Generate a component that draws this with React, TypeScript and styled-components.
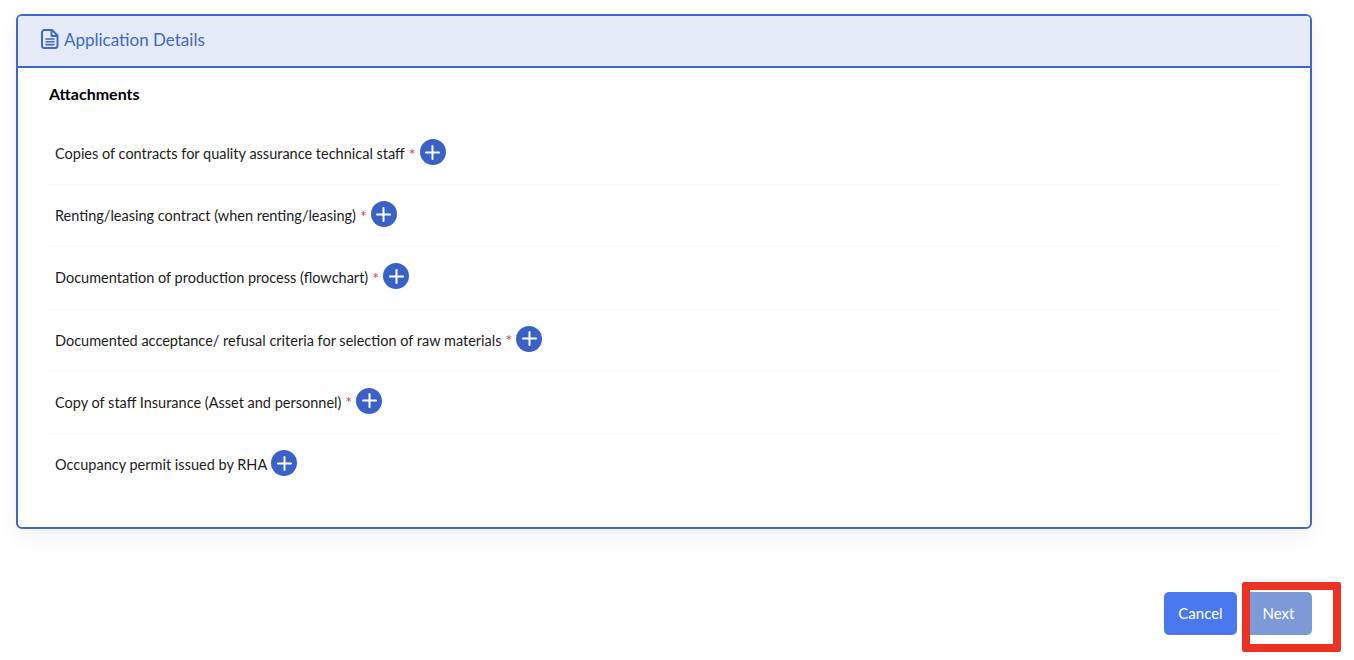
import React from "react";
import styled, { createGlobalStyle } from "styled-components";

const GlobalStyle = createGlobalStyle`
  html, body {
    margin: 0;
    padding: 0;
    background: #fff;
    font-family: "Lato", "Noto Sans", sans-serif;
  }
`;

const Page = styled.div`
  position: relative;
  width: 1354px;
  height: 660px;
  box-sizing: border-box;
  padding: 14px 42px 0 16px;
  overflow: hidden;
`;

const Card = styled.section`
  height: 515px;
  box-sizing: border-box;
  border: 2px solid #3f68c9;
  border-radius: 6px;
  box-shadow: 0 8px 20px rgba(0, 0, 0, 0.06);
  background: #fff;
  overflow: hidden;
`;

const CardHeader = styled.header`
  display: flex;
  align-items: center;
  gap: 5px;
  height: 52px;
  box-sizing: border-box;
  padding: 0 0 4px 23px;
  background: #e4ebf6;
  border-bottom: 2px solid #3f68c9;
  color: #3f68c9;
  font-size: 17px;
`;

const CardBody = styled.div`
  padding: 17px 30px 0 30px;
`;

const SectionTitle = styled.h3`
  margin: 0 0 20px 1px;
  font-size: 16px;
  line-height: 18px;
  font-weight: 700;
  color: #000;
`;

const Row = styled.div<{ $last?: boolean }>`
  display: flex;
  align-items: center;
  height: 62.2px;
  box-sizing: border-box;
  padding: 0 0 0 7px;
  border-bottom: 1px solid ${(p) => (p.$last ? "transparent" : "#f6f6f6")};
  font-size: 14.5px;
  color: #1c1c1c;
`;

const Required = styled.span`
  margin-left: 4px;
  color: #e23b50;
  font-size: 16px;
  line-height: 14px;
`;

const AddButton = styled.button`
  display: inline-flex;
  align-items: center;
  justify-content: center;
  width: 26px;
  height: 26px;
  margin: -3px 0 0 4px;
  padding: 0;
  border: none;
  border-radius: 50%;
  background: #3a62c6;
`;

const Footer = styled.div`
  display: flex;
  justify-content: flex-end;
  gap: 8px;
  margin-top: 63px;
`;

const ActionButton = styled.button<{ $disabled?: boolean }>`
  height: 43px;
  width: ${(p) => (p.$disabled ? "67px" : "73px")};
  padding: 0 0 2px;
  border: none;
  border-radius: 5px;
  background: ${(p) => (p.$disabled ? "#7e99d8" : "#4a78ee")};
  color: #fff;
  font-family: inherit;
  font-size: 15px;
`;

const Highlight = styled.div`
  position: absolute;
  left: 1242px;
  top: 582px;
  width: 99px;
  height: 70px;
  box-sizing: border-box;
  border: 8px solid #ec3323;
  border-radius: 2px;
`;

const PlusIcon = () => (
  <svg width="15" height="15" viewBox="0 0 15 15" fill="none">
    <path d="M7.5 1v13M1 7.5h13" stroke="#fff" strokeWidth="2" strokeLinecap="round" />
  </svg>
);

const DocIcon = () => (
  <svg width="18" height="20" viewBox="0 0 18 20" fill="none" stroke="#3f68c9" strokeWidth="2" strokeLinejoin="round">
    <path d="M3.5 1h7.5l5.5 5.5v10a2.5 2.5 0 0 1-2.5 2.5H3.5A2.5 2.5 0 0 1 1 16.500v-13A2.500 2.500 0 0 1 3.500 1z" />
    <path d="M10.500 1v6h6" />
    <path d="M5 10h8M5 12.800h8M5 15.600h8" strokeWidth="1.600" strokeLinecap="round" />
  </svg>
);

const attachments = [
  { label: "Copies of contracts for quality assurance technical staff", required: true },
  { label: "Renting/leasing contract (when renting/leasing)", required: true },
  { label: "Documentation of production process (flowchart)", required: true },
  { label: "Documented acceptance/ refusal criteria for selection of raw materials", required: true },
  { label: "Copy of staff Insurance (Asset and personnel)", required: true },
  { label: "Occupancy permit issued by RHA", required: false },
];

const App: React.FC = () => (
  <Page>
    <GlobalStyle />
    <Card>
      <CardHeader>
        <DocIcon />
        Application Details
      </CardHeader>
      <CardBody>
        <SectionTitle>Attachments</SectionTitle>
        {attachments.map((a, i) => (
          <Row key={a.label} $last={i === attachments.length - 1}>
            {a.label}
            {a.required && <Required>*</Required>}
            <AddButton>
              <PlusIcon />
            </AddButton>
          </Row>
        ))}
      </CardBody>
    </Card>
    <Footer>
      <ActionButton>Cancel</ActionButton>
      <ActionButton $disabled>Next</ActionButton>
    </Footer>
    <Highlight />
  </Page>
);

export default App;
